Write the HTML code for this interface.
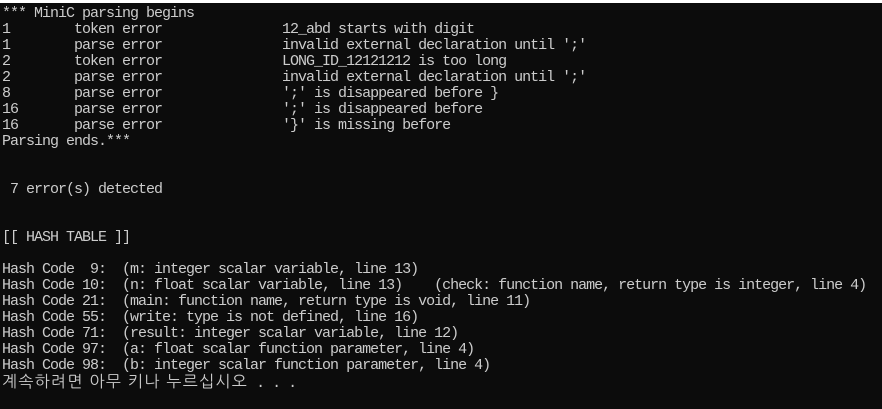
<!DOCTYPE html>
<html><head><meta charset="utf-8"><style>
html,body{margin:0;padding:0;background:#0c0c0c;width:882px;height:409px;overflow:hidden}
.top{position:absolute;left:0;top:0;width:882px;height:3px;background:#fff}
pre{position:absolute;left:2px;top:6px;margin:0;font-family:"Liberation Mono","NanumGothic",monospace;font-size:15px;letter-spacing:-1px;line-height:16px;color:#cccccc}
.k{font-family:"NanumGothic","Noto Sans CJK KR",sans-serif;font-size:16px;letter-spacing:1.3px}
</style></head><body><div class="top"></div>
<pre>*** MiniC parsing begins
1        token error               12_abd starts with digit
1        parse error               invalid external declaration until ';'
2        token error               LONG_ID_12121212 is too long
2        parse error               invalid external declaration until ';'
8        parse error               ';' is disappeared before }
16       parse error               ';' is disappeared before
16       parse error               '}' is missing before
Parsing ends.***


 7 error(s) detected


[[ HASH TABLE ]]

Hash Code  9:  (m: integer scalar variable, line 13)
Hash Code 10:  (n: float scalar variable, line 13)    (check: function name, return type is integer, line 4)
Hash Code 21:  (main: function name, return type is void, line 11)
Hash Code 55:  (write: type is not defined, line 16)
Hash Code 71:  (result: integer scalar variable, line 12)
Hash Code 97:  (a: float scalar function parameter, line 4)
Hash Code 98:  (b: integer scalar function parameter, line 4)
<span class="k">계속하려면 아무 키나 누르십시오</span> . . .</pre>
</body></html>
